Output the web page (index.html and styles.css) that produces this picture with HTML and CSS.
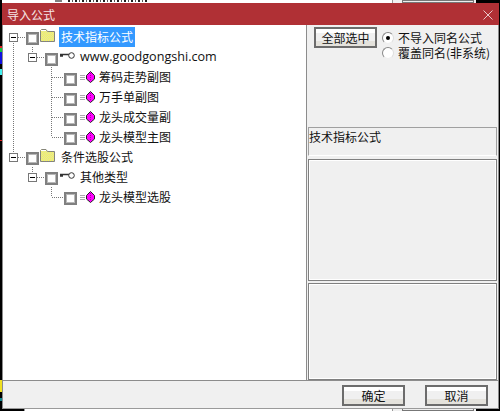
FILE: index.html
```html
<!DOCTYPE html>
<html lang="zh">
<head>
<meta charset="utf-8">
<title>导入公式</title>
<link rel="stylesheet" href="styles.css">
</head>
<body>
<div class="desktop">
  <div class="edge"></div>
  <div class="peek-top"><span class="peek-chk"></span><span class="peek-text"></span></div>
  <div class="peek-top-r"><span class="peek-box"></span></div>
  <div class="peek-bottom"></div>
  <div class="peek-bottom-r"><span class="peek-box"></span></div>
  <div class="dialog">
    <div class="titlebar">
      <span class="title">导入公式</span>
      <svg class="close" width="10" height="10" viewBox="0 0 10 10"><path d="M0.5 0.5L9.5 9.5M9.5 0.5L0.5 9.5" stroke="#e9c9ca" stroke-width="1" fill="none"/></svg>
    </div>
    <div class="body">
      <div class="main">
        <div class="tree">
          <svg class="lines" width="100" height="200" viewBox="0 0 100 200">
            <path d="M10.500 18V127M15 12.500H23M29.500 22V28M34 32.500H42M48.500 42V112M49 52.500H61M49 72.500H61M49 92.500H61M49 112.500H61M15 132.500H23M29.500 142V148M34 152.500H42M48.500 162V172M49 172.500H61" stroke="#777" stroke-dasharray="1 1" fill="none"/>
          </svg>
          <div class="row lv0">
            <span class="exp"></span><span class="chk"></span>
            <svg class="folder" width="15" height="13" viewBox="0 0 15 13"><defs><pattern id="dither" width="2" height="2" patternUnits="userSpaceOnUse"><rect width="2" height="2" fill="#ffff4d"/><rect width="1" height="1" fill="#d8d8b0"/><rect x="1" y="1" width="1" height="1" fill="#d8d8b0"/></pattern></defs><path d="M.5 12.500V1.500L1.500 .5H6L7.500 2.500H14.500V12.500Z" fill="url(#dither)" stroke="#85857a"/><path d="M1 1.500H6" stroke="#fff"/></svg>
            <span class="label sel">技术指标公式</span>
          </div>
          <div class="row lv1">
            <span class="exp"></span><span class="chk low"></span>
            <svg class="key" width="15" height="9" viewBox="0 0 15 9"><path d="M0 3.500H9M0 5H3" stroke="#333" stroke-width="1.500" fill="none"/><circle cx="11.500" cy="4.500" r="2.800" fill="#fff" stroke="#333"/></svg>
            <span class="label url">www.goodgongshi.com</span>
          </div>
          <div class="row lv2"><span class="chk low"></span><svg class="gem" width="17" height="12" viewBox="0 0 17 12"><path d="M0 4.500H5M0 6.500H5M0 8.500H5" stroke="#aaa"/><path d="M10.500 .5L14.500 4.500V8L10.500 11.500L6.500 8V4.500Z" fill="#f0f" stroke="#222"/><path d="M10.500 2V10" stroke="#a0a" stroke-dasharray="1 1"/></svg><span class="label">筹码走势副图</span></div>
          <div class="row lv2"><span class="chk low"></span><svg class="gem" width="17" height="12" viewBox="0 0 17 12"><path d="M0 4.500H5M0 6.500H5M0 8.500H5" stroke="#aaa"/><path d="M10.500 .5L14.500 4.500V8L10.500 11.500L6.500 8V4.500Z" fill="#f0f" stroke="#222"/><path d="M10.500 2V10" stroke="#a0a" stroke-dasharray="1 1"/></svg><span class="label">万手单副图</span></div>
          <div class="row lv2"><span class="chk low"></span><svg class="gem" width="17" height="12" viewBox="0 0 17 12"><path d="M0 4.500H5M0 6.500H5M0 8.500H5" stroke="#aaa"/><path d="M10.500 .5L14.500 4.500V8L10.500 11.500L6.500 8V4.500Z" fill="#f0f" stroke="#222"/><path d="M10.500 2V10" stroke="#a0a" stroke-dasharray="1 1"/></svg><span class="label">龙头成交量副</span></div>
          <div class="row lv2"><span class="chk"></span><svg class="gem" width="17" height="12" viewBox="0 0 17 12"><path d="M0 4.500H5M0 6.500H5M0 8.500H5" stroke="#aaa"/><path d="M10.500 .5L14.500 4.500V8L10.500 11.500L6.500 8V4.500Z" fill="#f0f" stroke="#222"/><path d="M10.500 2V10" stroke="#a0a" stroke-dasharray="1 1"/></svg><span class="label">龙头模型主图</span></div>
          <div class="row lv0">
            <span class="exp"></span><span class="chk"></span>
            <svg class="folder" width="15" height="13" viewBox="0 0 15 13"><defs><pattern id="dither2" width="2" height="2" patternUnits="userSpaceOnUse"><rect width="2" height="2" fill="#ffff4d"/><rect width="1" height="1" fill="#d8d8b0"/><rect x="1" y="1" width="1" height="1" fill="#d8d8b0"/></pattern></defs><path d="M.5 12.500V1.500L1.500 .5H6L7.500 2.500H14.500V12.500Z" fill="url(#dither2)" stroke="#85857a"/><path d="M1 1.500H6" stroke="#fff"/></svg>
            <span class="label">条件选股公式</span>
          </div>
          <div class="row lv1">
            <span class="exp"></span><span class="chk"></span>
            <svg class="key" width="15" height="9" viewBox="0 0 15 9"><path d="M0 3.500H9M0 5H3" stroke="#333" stroke-width="1.500" fill="none"/><circle cx="11.500" cy="4.500" r="2.800" fill="#fff" stroke="#333"/></svg>
            <span class="label">其他类型</span>
          </div>
          <div class="row lv2"><span class="chk"></span><svg class="gem" width="17" height="12" viewBox="0 0 17 12"><path d="M0 4.500H5M0 6.500H5M0 8.500H5" stroke="#aaa"/><path d="M10.500 .5L14.500 4.500V8L10.500 11.500L6.500 8V4.500Z" fill="#f0f" stroke="#222"/><path d="M10.500 2V10" stroke="#a0a" stroke-dasharray="1 1"/></svg><span class="label">龙头模型选股</span></div>
        </div>
        <div class="side">
          <div class="opts">
            <button class="btn">全部选中</button>
            <div class="radios">
              <div class="radio-row"><span class="radio on"></span><div class="radio-text">不导入同名公式</div></div>
              <div class="radio-row"><span class="radio"></span><div class="radio-text">覆盖同名(非系统)</div></div>
            </div>
          </div>
          <div class="info">技术指标公式</div>
          <div class="panel p1"></div>
          <div class="panel p2"></div>
        </div>
      </div>
      <div class="footer">
        <button class="btn">确定</button>
        <button class="btn">取消</button>
      </div>
    </div>
  </div>
</div>
</body>
</html>
```
FILE: styles.css
```css
* { box-sizing: border-box; }
html, body { margin: 0; padding: 0; }
body {
  width: 500px; height: 411px; overflow: hidden; background: #000;
  font-family: "Noto Sans CJK SC", sans-serif; font-size: 12px; color: #111;
}
.desktop { position: relative; width: 500px; height: 411px; background: #000; overflow: hidden; }
.edge {
  position: absolute; left: 0; top: 0; width: 2px; height: 411px;
  background: linear-gradient(#000 0 46px, #e02020 46px 48px, #10c040 48px 52px, #1010e0 52px 64px, #000 64px 69px, #40f0f0 69px 75px, #000 75px 140px, #e02020 140px 141px, #000 141px 380px, #f0e020 380px 392px, #000 392px 398px, #108890 398px 401px, #000 401px);
}
.peek-top { position: absolute; left: 2px; top: 0; width: 390px; height: 3px; background: #fff; overflow: hidden; }
.peek-chk { position: absolute; left: 53px; top: -10px; width: 7px; height: 12px; border: 2px solid #808080; }
.peek-text {
  position: absolute; left: 66px; top: 0; width: 80px; height: 2px;
  background: repeating-linear-gradient(90deg, #222 0 2px, #fff 2px 4px, #555 4px 5px, #fff 5px 7px);
}
.peek-top-r { position: absolute; left: 392px; top: 0; width: 84px; height: 3px; background: #f0f0f0; border-left: 1px solid #999; overflow: hidden; }
.peek-bottom { position: absolute; left: 24px; top: 408px; width: 368px; height: 3px; background: #fff; border-left: 1px solid #999; }
.peek-bottom-r { position: absolute; left: 392px; top: 408px; width: 84px; height: 3px; background: #f0f0f0; border-left: 1px solid #999; overflow: hidden; }
.peek-box { display: block; width: 72px; height: 3px; margin-left: 9px; border: 1px solid #777; background: #eee; }
.dialog {
  position: absolute; left: 2px; top: 3px; width: 497px; height: 406px;
  background: #f0f0f0; display: flex; flex-direction: column;
  border-left: 1px solid #8c8c8c; border-right: 1px solid #8c8c8c; border-bottom: 1px solid #9a9a9a;
}
.titlebar {
  height: 22px; margin: 0 -1px; background: #b03035; color: #fff;
  display: flex; align-items: center; justify-content: space-between;
  padding: 0 6px 0 5px; font-size: 12px; flex: none;
}
.title { color: #f6e6e6; }
.close { margin-top: 1px; }
.body { flex: 1; display: flex; flex-direction: column; min-height: 0; }
.main { height: 356px; display: flex; flex: none; border-bottom: 1px solid #8c8c8c; }
.tree {
  position: relative; width: 304px; background: #fff; padding-top: 2px;
  border-right: 1px solid #8c8c8c; flex: none;
}
.lines { position: absolute; left: 0; top: 0; }
.row { position: relative; display: flex; align-items: center; height: 20px; }
.lv0 { padding-left: 6px; }
.lv1 { padding-left: 25px; }
.lv2 { padding-left: 61px; }
.exp {
  width: 9px; height: 9px; border: 1px solid #777; background: #fff; margin: 1px 8px 0 0; flex: none;
  display: flex; align-items: center; justify-content: center;
}
.exp::before { content: ""; width: 5px; height: 1px; background: #000; }
.chk { width: 13px; height: 13px; border: 2px solid #808080; box-shadow: inset 0 0 0 1px #b8b8b8; background: #fff; flex: none; margin-top: 3px; }
.chk.low { margin-top: 5px; }
.folder { margin-left: 1px; margin-top: -3px; flex: none; }
.key { margin-left: 2px; margin-top: -3px; flex: none; }
.gem { margin-left: 3px; flex: none; }
.label { line-height: 20px; white-space: nowrap; }
.lv0 .label { margin-left: 4px; padding: 0 2px; }
.lv1 .label { margin-left: 5px; font-size: 12px; }
.lv2 .label { margin-left: 2px; }
.lv1 .url { font-family: "Open Sans", sans-serif; font-size: 12.6px; }
.sel { background: #3399ff; color: #fff; }
.side { flex: 1; display: flex; flex-direction: column; padding: 0 1px; min-width: 0; }
.opts { height: 102px; display: flex; padding: 2px 0 0 6px; flex: none; }
.btn {
  width: 63px; height: 21px; padding: 0; font: inherit; color: #111;
  border: 2px solid #6c6c6c; border-radius: 0;
  background: linear-gradient(#fff 0 25%, #f0f0f0 25% 70%, #e4e2dc 70%);
}
.radios { margin-left: 5px; padding-top: 3px; }
.radio-row { display: flex; align-items: center; gap: 4px; height: 15px; white-space: nowrap; }
.radio-text { height: 15px; line-height: 15px; overflow: visible; }
.radio { width: 12px; height: 12px; border-radius: 50%; border: 1px solid; border-color: #888 #ddd #eee #888; background: #fff; position: relative; flex: none; }
.radio.on::after { content: ""; position: absolute; left: 3px; top: 3px; width: 4px; height: 4px; border-radius: 50%; background: #000; }
.info { height: 29px; border: 1px solid #a0a0a0; border-bottom-color: #fff; line-height: 18px; flex: none; }
.panel { border: 1px solid #808080; box-shadow: inset 0 0 0 1px #fff; flex: none; }
.p1 { height: 122px; margin-top: 3px; }
.p2 { height: 97px; margin-top: 2px; }
.footer { flex: 1; display: flex; gap: 20px; padding: 4px 0 0 339px; }
```
